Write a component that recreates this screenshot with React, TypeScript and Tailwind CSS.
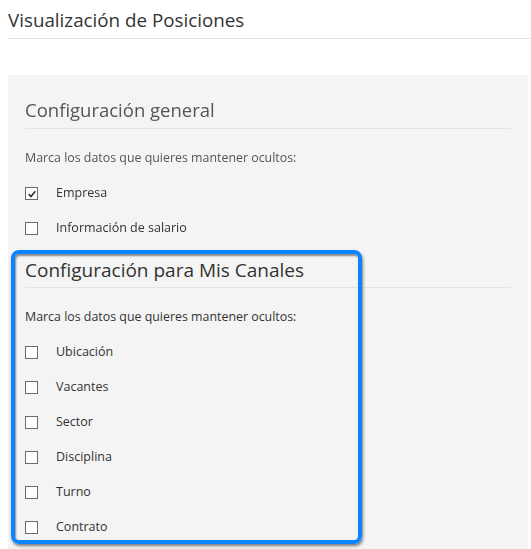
import React from "react";

function Box({ checked }: { checked?: boolean }) {
  return (
    <span className="relative flex h-[13px] w-[13px] shrink-0 items-center justify-center border border-[#6b6b6b] bg-white">
      {checked && (
        <svg viewBox="0 0 12 12" className="h-[10px] w-[10px]">
          <path d="M2 6.2 L4.8 9 L10 2.6" fill="none" stroke="#333" strokeWidth="2" />
        </svg>
      )}
    </span>
  );
}

function Row({ label, checked }: { label: string; checked?: boolean }) {
  return (
    <div className="flex h-[35px] items-center gap-[18px]">
      <Box checked={checked} />
      <span className="text-[12.5px] text-[#333]">{label}</span>
    </div>
  );
}

export default function App() {
  const canales = ["Ubicación", "Vacantes", "Sector", "Disciplina", "Turno", "Contrato"];
  return (
    <div
      className="relative h-[549px] w-[531px] overflow-hidden bg-white"
      style={{ fontFamily: '"Open Sans", "Noto Sans", sans-serif' }}
    >
      <div className="ml-2 h-[39px] border-b border-[#e3e3e3] pt-[7px] text-[18.8px] leading-[26px] text-[#333]">
        Visualización de Posiciones
      </div>
      <div className="ml-2 mt-[36px] w-[520px] bg-[#f4f4f4] px-[17px] pb-[20px]">
        <div className="blur-[0.7px]">
          <div className="border-b border-[#e2e2e2] pb-[5px] pt-[22px] text-[18.5px] leading-[26px] text-[#555]">
            Configuración general
          </div>
          <div className="mt-[12px]">
            <div className="flex h-[35px] items-center text-[12.4px] text-[#555]">
              Marca los datos que quieres mantener ocultos:
            </div>
            <Row label="Empresa" checked />
            <Row label="Información de salario" />
          </div>
        </div>
        <div className="mt-[11px] border-b border-[#e2e2e2] pb-[4px] text-[19px] leading-[26px] text-[#333]">
          Configuración para Mis Canales
        </div>
        <div className="mt-[12px]">
          <div className="flex h-[35px] items-center text-[12.4px] text-[#333]">
            Marca los datos que quieres mantener ocultos:
          </div>
          {canales.map((c) => (
            <Row key={c} label={c} />
          ))}
        </div>
      </div>
      <div className="pointer-events-none absolute left-[11px] top-[250px] h-[294px] w-[351px] rounded-[8px] border-[4px] border-[#0a84ff] shadow-[inset_1px_2px_2px_rgba(0,0,0,0.45),1px_2px_3px_rgba(0,0,0,0.5)]" />
    </div>
  );
}
